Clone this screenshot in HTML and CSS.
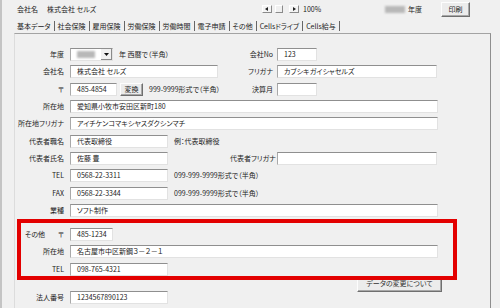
FILE: index.html
```html
<!DOCTYPE html>
<html lang="ja">
<head>
<meta charset="utf-8">
<title>基本データ</title>
<link rel="stylesheet" href="styles.css">
</head>
<body>
<div class="window">
  <header class="topbar">
    <div class="company">
      <span class="co-label">会社名</span>
      <span class="co-name">株式会社 セルズ</span>
    </div>
    <div class="zoombar">
      <span class="sb-btn"><svg width="4" height="4" viewBox="0 0 4 4"><path d="M3 0 L0 2 L3 4 Z" fill="#222"/></svg></span>
      <span class="sb-thumb"></span>
      <span class="sb-btn"><svg width="4" height="4" viewBox="0 0 4 4"><path d="M1 0 L4 2 L1 4 Z" fill="#222"/></svg></span>
      <span class="zoom-val">100%</span>
    </div>
    <div class="year">
      <span class="blur"></span><span>年度</span>
    </div>
    <button class="btn print">印刷</button>
  </header>

  <nav class="tabs">
    <span class="tab">基本データ</span>
    <span class="tab">社会保険</span>
    <span class="tab">雇用保険</span>
    <span class="tab">労働保険</span>
    <span class="tab">労働時間</span>
    <span class="tab">電子申請</span>
    <span class="tab">その他</span>
    <span class="tab">Cellsドライブ</span>
    <span class="tab">Cells給与</span>
  </nav>

  <main class="panel">
    <div class="rows">
      <div class="row">
        <span class="lbl">年度</span>
        <div class="left-cell">
          <div class="combo"><span class="combo-val"><span class="blur small"></span></span><span class="combo-btn"><svg width="5" height="3" viewBox="0 0 5 3"><path d="M0 0 H5 L2.5 3 Z" fill="#111"/></svg></span></div>
          <span class="note">年 西暦で（半角）</span>
        </div>
        <span class="lbl-r">会社No</span>
        <div class="inp w40">123</div>
      </div>
      <div class="row">
        <span class="lbl">会社名</span>
        <div class="left-cell">
          <div class="inp w148">株式会社 セルズ</div>
        </div>
        <span class="lbl-r">フリガナ</span>
        <div class="inp w160">カブシキガイシャセルズ</div>
      </div>
      <div class="row">
        <span class="lbl">〒</span>
        <div class="left-cell">
          <div class="inp w47">485-4854</div>
          <button class="btn conv">変換</button>
          <span class="note">999-9999形式で（半角）</span>
        </div>
        <span class="lbl-r">決算月</span>
        <div class="inp w40"></div>
      </div>
      <div class="row">
        <span class="lbl">所在地</span>
        <div class="inp w368">愛知県小牧市安田区新町180</div>
      </div>
      <div class="row">
        <span class="lbl">所在地フリガナ</span>
        <div class="inp w368">アイチケンコマキシヤスダクシンマチ</div>
      </div>
      <div class="row">
        <span class="lbl">代表者職名</span>
        <div class="inp w98">代表取締役</div>
        <span class="note ex">例：代表取締役</span>
      </div>
      <div class="row">
        <span class="lbl">代表者氏名</span>
        <div class="left-cell">
          <div class="inp w98">佐藤 豊</div>
        </div>
        <span class="lbl-r">代表者フリガナ</span>
        <div class="inp w160"></div>
      </div>
      <div class="row">
        <span class="lbl">TEL</span>
        <div class="inp w98">0568-22-3311</div>
        <span class="note ex">099-999-9999形式で（半角）</span>
      </div>
      <div class="row">
        <span class="lbl">FAX</span>
        <div class="inp w98">0568-22-3344</div>
        <span class="note ex">099-999-9999形式で（半角）</span>
      </div>
      <div class="row">
        <span class="lbl">業種</span>
        <div class="inp w368">ソフト制作</div>
      </div>
    </div>

    <section class="other">
      <div class="highlight"></div>
      <div class="row">
        <span class="lbl split"><span>その他</span><span>〒</span></span>
        <div class="inp w43">485-1234</div>
      </div>
      <div class="row">
        <span class="lbl">所在地</span>
        <div class="inp w368">名古屋市中区新鋼３－２－１</div>
      </div>
      <div class="row">
        <span class="lbl">TEL</span>
        <div class="inp w98">098-765-4321</div>
      </div>
    </section>

    <div class="bottom">
      <div class="row corp">
        <span class="lbl">法人番号</span>
        <div class="inp w98">1234567890123</div>
      </div>
      <button class="btn change">データの変更について</button>
    </div>
  </main>
</div>
</body>
</html>
```

FILE: styles.css
```css
* { box-sizing: border-box; }
html, body { margin: 0; padding: 0; }
body {
  width: 500px;
  height: 308px;
  overflow: hidden;
  background: #f0f0f0;
  font-family: "Noto Sans CJK JP", "Noto Sans", sans-serif;
  font-feature-settings: "palt";
  font-size: 7px;
  line-height: 1;
  color: #222;
}
.window {
  height: 308px;
  border-left: 2px solid #c4c4c4;
}

/* top bar */
.topbar {
  display: flex;
  align-items: center;
  height: 18px;
  padding-left: 15px;
}
.company { width: 245px; display: flex; }
.co-label { margin-right: 9px; }
.zoombar { width: 123px; display: flex; align-items: center; }
.sb-btn {
  width: 10px; height: 8px;
  display: flex; align-items: center; justify-content: center;
  background: #f4f4f4;
  border: 1px solid; border-color: #fff #8a8a8a #8a8a8a #fff;
}
.sb-thumb {
  width: 8px; height: 8px; margin: 0 6px 0 3px;
  border: 1px solid; border-color: #fff #8a8a8a #8a8a8a #fff;
}
.zoom-val { margin-left: 4px; }
.year { width: 56px; display: flex; align-items: center; }
.blur {
  display: inline-block;
  width: 20px; height: 7px;
  margin-right: 3px;
  background: #b8b8b8;
  filter: blur(1.2px);
}
.blur.small { width: 18px; height: 7px; margin: 0; }
.btn {
  font: inherit;
  color: #222;
  padding: 0;
  background: #ececec;
  border: 1px solid;
  border-color: #fdfdfd #6f6f6f #6f6f6f #fdfdfd;
  box-shadow: inset -1px -1px 0 #a8a8a8;
  display: flex; align-items: center; justify-content: center;
}
.print { width: 29px; height: 15px; }

/* tabs */
.tabs {
  display: flex;
  align-items: center;
  height: 15px;
  padding-left: 15px;
}
.tab {
  padding: 0 3px;
  border-right: 1px solid #666;
  line-height: 10px;
}
.tab:first-child { padding-left: 0; }

/* panel */
.panel {
  margin-left: 12px;
  width: 477px;
  height: 275px;
  border-top: 1px solid #a3a3a3;
  border-right: 1px solid #8e8e8e;
  border-left: 1px solid #dcdcdc;
  padding-top: 14px;
}
.rows {
  display: grid;
  grid-auto-rows: 13px;
  row-gap: 4.33px;
}
.row {
  display: flex;
  align-items: center;
  height: 13px;
}
.lbl {
  width: 49px;
  margin-right: 6px;
  text-align: right;
  white-space: nowrap;
}
.lbl.split {
  display: flex;
  justify-content: space-between;
  padding-left: 10px;
}
.left-cell {
  width: 160px;
  display: flex;
  align-items: center;
  height: 13px;
}
.lbl-r {
  width: 43px;
  margin-right: 4px;
  text-align: right;
  white-space: nowrap;
}
.inp {
  height: 13px;
  background: #fff;
  border: 1px solid;
  border-color: #8f8f8f #e2e2e2 #e2e2e2 #a9a9a9;
  padding-left: 6px;
  display: flex;
  align-items: center;
  white-space: nowrap;
  flex: none;
}
.w40 { width: 40px; }
.w43 { width: 43px; }
.w47 { width: 47px; }
.w98 { width: 98px; }
.w148 { width: 148px; }
.w160 { width: 160px; }
.w368 { width: 368px; }
.combo {
  width: 43px; height: 13px;
  display: flex;
  background: #fff;
  border: 1px solid;
  border-color: #8f8f8f #e2e2e2 #e2e2e2 #a9a9a9;
}
.combo-val { flex: 1; display: flex; align-items: center; padding-left: 6px; }
.combo-btn {
  width: 12px;
  display: flex; align-items: center; justify-content: center;
  background: #f0f0f0;
  border-left: 1px solid #fff;
  box-shadow: inset -1px -1px 0 #8a8a8a;
}
.note { margin-left: 6px; white-space: nowrap; }
.note.ex { margin-left: 6px; }
.conv { width: 23px; height: 13px; margin-left: 3px; }

/* other section */
.other {
  position: relative;
  margin-top: 11px;
  display: grid;
  grid-auto-rows: 13px;
  row-gap: 4.5px;
}
.highlight {
  position: absolute;
  left: 2px;
  top: -9px;
  width: 440px;
  height: 61px;
  border: 4.5px solid #e30000;
  z-index: 2;
  pointer-events: none;
}
.bottom {
  display: flex;
  align-items: flex-start;
}
.corp { margin-top: 15px; }
.change {
  width: 85px;
  height: 16px;
  margin-left: 189px;
  color: #333;
}
```
